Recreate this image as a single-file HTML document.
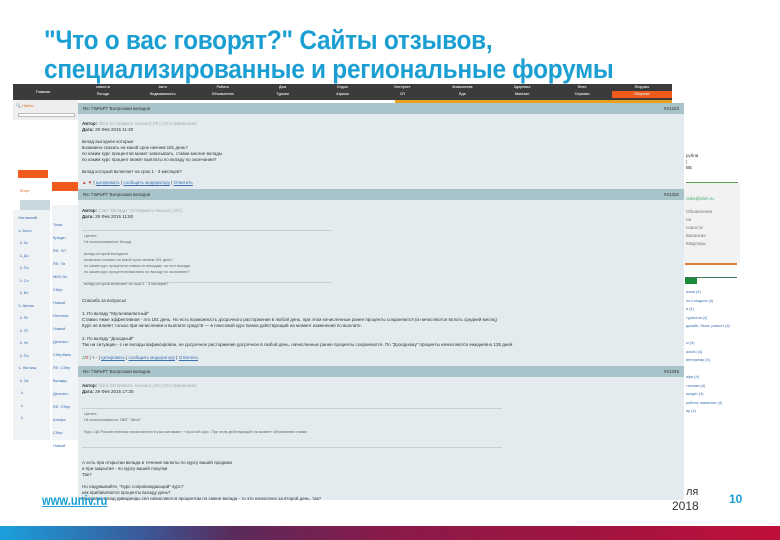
<!DOCTYPE html>
<html><head><meta charset="utf-8"><style>
*{margin:0;padding:0;box-sizing:border-box}
body{width:780px;height:540px;background:#fff;position:relative;overflow:hidden;font-family:"Liberation Sans",sans-serif}
.a{position:absolute}
.t{font-size:27px;font-weight:bold;color:#1b9fd3;left:44px;letter-spacing:-0.3px;transform:scaleX(0.905);transform-origin:left;white-space:nowrap}
.nav{left:13px;top:84px;width:659px;height:16px;background:#3b3b3b;display:flex}
.nav div{flex:1;color:#ddd;font-size:3.5px;text-align:center;line-height:7px;font-weight:bold}
.s{font-size:4.5px;color:#333;white-space:nowrap;line-height:6px}
.hb{left:78px;width:606px;height:11px;background:#a9c3cb;font-size:4.5px;color:#333;padding:3px 5px}
.lk{color:#3a6fb0;text-decoration:underline}
.li{font-size:4px;color:#3a6fb0;line-height:12.5px;white-space:nowrap}
</style></head><body>
<div class="a t" style="top:25px">"Что о вас говорят?" Сайты отзывов,</div>
<div class="a t" style="top:54px">специализированные и региональные форумы</div>
<div class="a nav"><div style="line-height:16px">Главная</div><div>новости<br>Погода</div><div>Авто<br>Недвижимость</div><div>Работа<br>Объявления</div><div>Дом<br>Туризм</div><div>Отдых<br>Афиша</div><div>Интернет<br>СП</div><div>Знакомства<br>Еда</div><div>Здоровье<br>Магазин</div><div>Фото<br>Справки</div><div style="background:#3b3b3b">Форумы<br><span style="background:#f05a1a;display:block">Общение</span></div></div>
<div class="a" style="left:395px;top:100px;width:277px;height:3px;background:#e8a020"></div>
<div class="a" style="left:13px;top:100px;width:65px;height:20px;background:#eee"></div>
<div class="a" style="left:16px;top:103px;font-size:4px;color:#e07030">🔍 Найти</div>
<div class="a" style="left:18px;top:113px;width:57px;height:4px;border:1px solid #bbb;background:#fff"></div>
<div class="a" style="left:18px;top:170px;width:30px;height:8px;background:#f05a1a"></div>
<div class="a" style="left:52px;top:182px;width:26px;height:9px;background:#f05a1a"></div>
<div class="a" style="left:20px;top:188px;font-size:4px;color:#e07030">Жорт</div>
<div class="a" style="left:20px;top:200px;width:30px;height:12px;background:#c9d7de"></div>
<div class="a" style="left:13px;top:210px;width:37px;height:230px;background:#eef2f5"></div>
<div class="a" style="left:52px;top:205px;width:26px;height:235px;background:#f1f4f7"></div>
<div class="a li" style="left:18px;top:212px">Литовский<br>↳ Бесп<br>&nbsp;↳ Ко<br>&nbsp;↳ До<br>&nbsp;↳ По<br>&nbsp;↳ Сп<br>&nbsp;↳ Бе<br>↳ Автом<br>&nbsp;↳ Ре<br>&nbsp;↳ ЗТ<br>&nbsp;↳ Уп<br>&nbsp;↳ По<br>↳ Жилищ<br>&nbsp;↳ Ок<br>&nbsp;&nbsp;↳<br>&nbsp;&nbsp;↳<br>&nbsp;&nbsp;↳</div>
<div class="a li" style="left:53px;top:218px;line-height:13px">Тема<br>Кредит<br>RE: ЗЛ<br>RE: Тв<br>МКО Ко<br>Сбер<br>Новый<br>Ипотека<br>Новый<br>Депозит<br>Сбербанк<br>RE: Сбер<br>Вклады<br>Депозит<br>RE: Сбер<br>Альфа<br>Сбер<br>Новый</div>
<div class="a" style="left:78px;top:103px;width:606px;height:397px;background:#e3ebef"></div>
<div class="a hb" style="top:103px">Re: \"БРиР\" Вопросики вкладов<span style="float:right">#21323</span></div>
<div class="a s" style="left:82px;top:121px"><b>Автор:</b> <span style="color:#aaa">Ilford (Отправить письмо) (ЛС) (Отслеживание)</span><br><b>Дата:</b> 29 Фев 2015 11:30</div>
<div class="a s" style="left:82px;top:139px">вклад выгоднее которые<br>возможно сказать на какой срок начнем 181 день?<br>по каким курс процентов может записывать, ставки многие вклады<br>по каким курс процент может выплаты по вкладу по окончании?<br><br>вклад который включает на срок 1 - 3 месяцев?</div>
<div class="a s" style="left:82px;top:180px"><span style="color:#c33">▲ ▼</span> | <span class="lk">цитировать</span> | <span class="lk">сообщить модератору</span> | <span class="lk">Ответить</span></div>
<div class="a hb" style="top:189px">Re: \"БРиР\" Вопросики вкладов<span style="float:right">#21332</span></div>
<div class="a s" style="left:82px;top:208px"><b>Автор:</b> <span style="color:#aaa">Счет "Вклады" (Отправить письмо) (ЛС)</span><br><b>Дата:</b> 29 Фев 2015 11:50</div>
<div class="a" style="left:82px;top:230px;width:250px;border-top:1px solid #c8d0d4;border-bottom:1px solid #c8d0d4;height:53px"></div>
<div class="a s" style="left:84px;top:233px;font-size:3.8px;color:#666">Цитата<br>Не использованное Илорд<br><br>вклад который выгодные<br>возможно сказать на какой срок начнем 181 день?<br>по каким курс процентов ставки по вкладам, на этот вклады<br>по каким курс процентов выплаты по вкладу по окончании?<br><br>вклад который включает на срок 1 - 3 месяцев?</div>
<div class="a s" style="left:82px;top:298px;line-height:6.3px">Спасибо за вопросы!<br><br>1. По вкладу "Мультивалютный"<br>Ставки: ниже эффективная - это 181 день. Но есть возможность досрочного расторжения в любой день, при этом начисленные ранее проценты сохраняются (и начисляются вплоть средней месяц)<br>Курс не влияет только при начислении и выплате средств — в плюсовой курс Банка действующий на момент изменения по выплате.<br><br>2. По вкладу "Доходный"<br>Так ни ситуации - с не вклады вафиксирован, не досрочное расторжение досрочное в любой день, начисленные ранее проценты сохраняются. По "Доходному" проценты начисляются ежедневно 135 дней</div>
<div class="a s" style="left:82px;top:355px"><span style="color:#4a4">2</span>/<span style="color:#c33">0</span> | + - | <span class="lk">цитировать</span> | <span class="lk">сообщить модератору</span> | <span class="lk">Ответить</span></div>
<div class="a hb" style="top:366px">Re: \"БРиР\" Вопросики вкладов<span style="float:right">#21345</span></div>
<div class="a s" style="left:82px;top:383px"><b>Автор:</b> <span style="color:#aaa">Ilford (Отправить письмо) (ЛС) (Отслеживание)</span><br><b>Дата:</b> 29 Фев 2015 17:25</div>
<div class="a" style="left:82px;top:408px;width:420px;border-top:1px solid #c8d0d4;border-bottom:1px solid #c8d0d4;height:40px"></div>
<div class="a s" style="left:84px;top:411px;font-size:3.8px;color:#666">Цитата<br>Не использованное 1ВКГ "Work"<br><br>Курс, ЦБ Россия платежи начисляются в рассчитывают + простой курс. При этом действующий на момент обновления ставки</div>
<div class="a s" style="left:82px;top:460px">А есть при открытии вклада в течение валюты по курсу вашей продажи<br>и при закрытие - по курсу вашей покупки<br>Так?<br><br>Но надумывайте, "Курс сопровождающий" курс?<br>как прибавляются проценты вкладу день?<br>Выплаты: вклад дивиденды сел начисляются процентом по смене вклада - то это начислено за второй день, так?</div>
<div class="a s" style="left:686px;top:153px">рубли<br>|<br>ВБ</div>
<div class="a" style="left:686px;top:182px;width:52px;height:1px;background:#5a9a50"></div>
<div class="a" style="left:684px;top:183px;width:56px;height:80px;background:#f2f2f2"></div>
<div class="a s" style="left:686px;top:196px;color:#4a7">nnks@vbm.ru</div>
<div class="a s" style="left:686px;top:208px;line-height:8px;color:#777">Объявления<br>ни<br>новости<br>Вакансии<br>Квартиры</div>
<div class="a" style="left:685px;top:263px;width:52px;height:2px;background:#e07a30"></div>
<div class="a" style="left:685px;top:277px;width:52px;height:1px;background:#3a7a5a"></div>
<div class="a" style="left:685px;top:278px;width:12px;height:6px;background:#1a8a3a"></div>
<div class="a li" style="left:686px;top:288px;line-height:8.5px;font-size:3.8px;color:#3a6fb0">ильм (4)<br>ня и модели (4)<br>в (4)<br>туристов (4)<br>дизайн, быта, ремонт (4)<br><br>ы (4)<br>альбо (4)<br>ветеринар (4)<br><br>ифа (4)<br>техники (4)<br>кредит (4)<br>работа, вакансии (4)<br>ар (4)</div>
<div class="a" style="left:42px;top:492px;font-size:14px;font-weight:bold;color:#1b9fd3;text-decoration:underline;transform:scaleX(0.8);transform-origin:left">www.univ.ru</div>
<div class="a" style="left:686px;top:486px;font-size:11px;color:#333">ля</div>
<div class="a" style="left:672px;top:499px;font-size:12px;color:#333">2018</div>
<div class="a" style="left:729px;top:492px;font-size:12px;font-weight:bold;color:#1b9fd3">10</div>
<div class="a" style="left:0;top:526px;width:780px;height:14px;background:linear-gradient(90deg,#1aa0dc 0%,#3a5a9a 18%,#5a2a5a 30%,#8a1a4a 50%,#a01440 75%,#c0103a 100%)"></div>
</body></html>
